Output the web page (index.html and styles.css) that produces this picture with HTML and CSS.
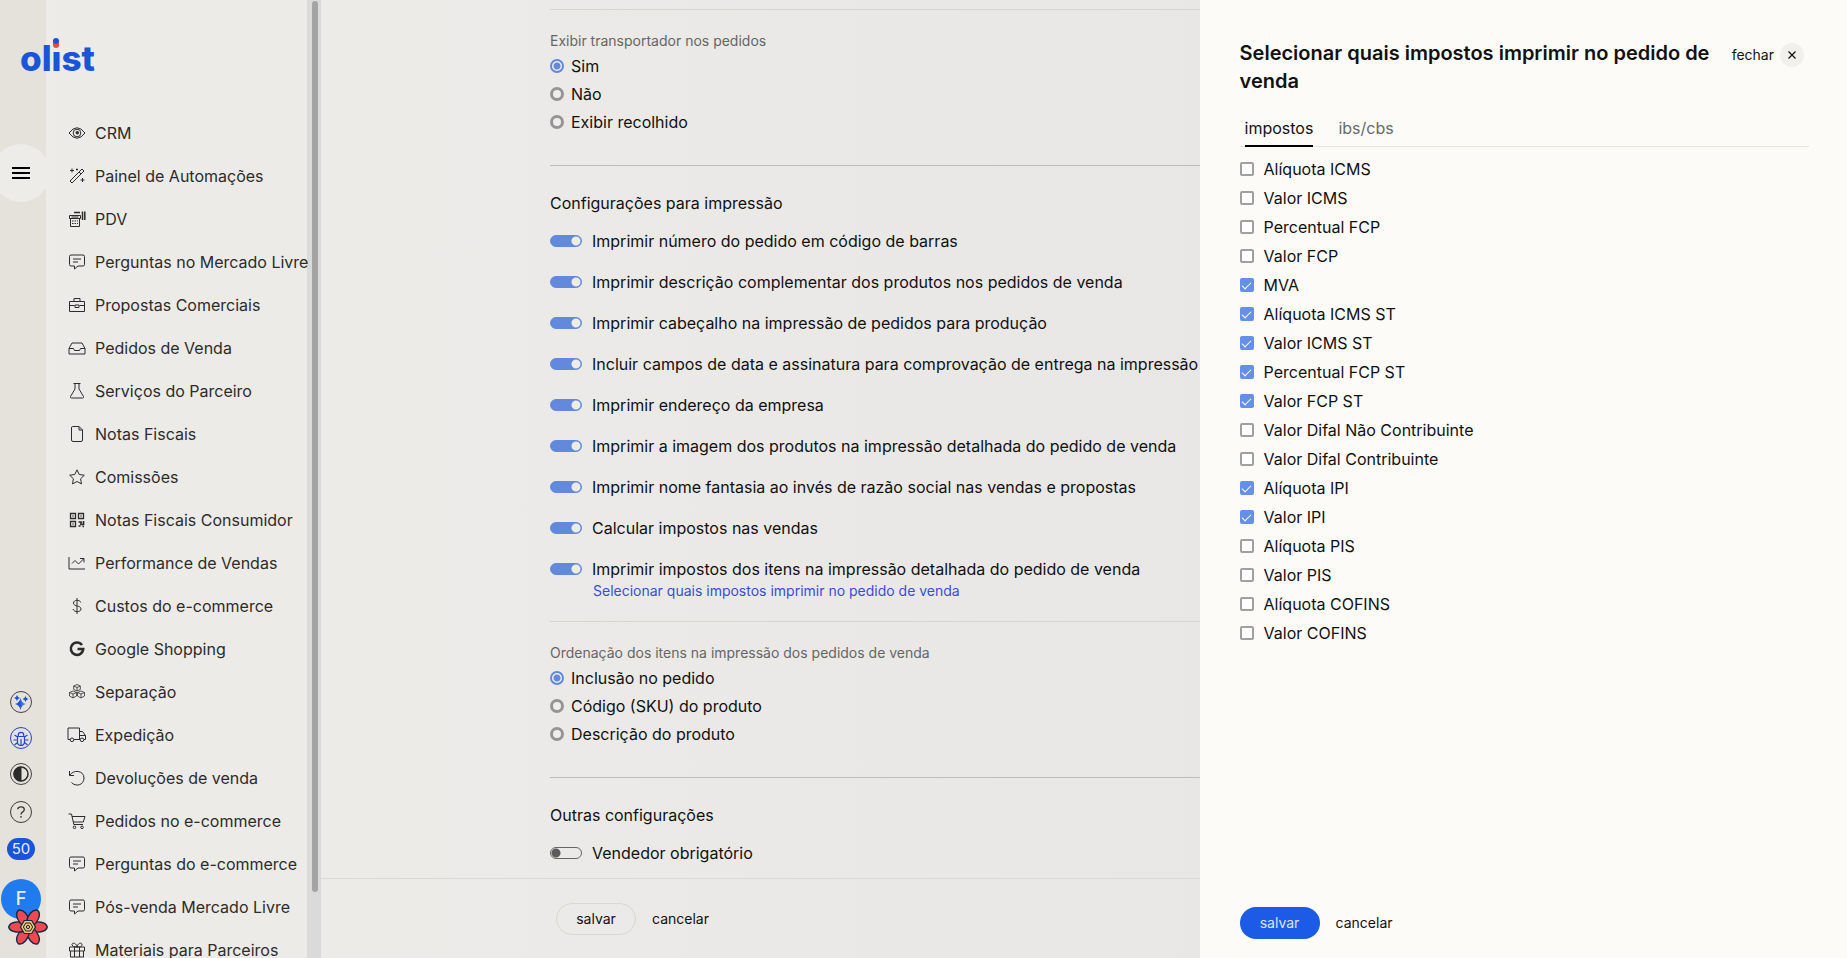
FILE: index.html
```
<!DOCTYPE html>
<html lang="pt-BR">
<head>
<meta charset="utf-8">
<title>Configurações dos pedidos de venda</title>
<link rel="stylesheet" href="styles.css">
</head>
<body>
<div class="app">
  <aside class="rail">
    <button class="menu-button" aria-label="Menu"><svg width="20" height="14" viewBox="0 0 20 14"><path d="M1 2h18M1 7h18M1 12h18" stroke="#000" stroke-width="2" fill="none"/></svg></button>
    <div class="rail-tools">
      <button class="tool" aria-label="Assistente"><svg viewBox="0 0 22 22"><defs><linearGradient id="spark" x1="0" x2="1" y1="0" y2="0"><stop offset=".4" stop-color="#1d50d8"/><stop offset="1" stop-color="#6fa0cc"/></linearGradient></defs><circle cx="11" cy="11" r="10.5" fill="none" stroke="#444"/><path fill="url(#spark)" d="M10.500 7q1 5 5.500 6-4.500 1-5.500 6-1-5-5.500-6 4.500-1 5.500-6z"/><path fill="#1d50d8" d="M7 4q.6 2.400 3 3-2.400.6-3 3-.6-2.400-3-3 2.400-.6 3-3zM15.500 5q.6 2.400 3 3-2.400.6-3 3-.6-2.400-3-3 2.400-.6 3-3z"/></svg></button>
      <button class="tool" aria-label="Relatar erro"><svg viewBox="0 0 22 22" fill="none" stroke="#2345dd"><circle cx="11" cy="11" r="10.500"/><path d="M7.500 9.500h7v5.500a3.500 3.500 0 0 1-7 0zM8.300 9.500V8a2.700 2.700 0 0 1 5.400 0v1.500M11 12v6M7.500 10L4.500 8M14.500 10l3-2M7.500 13H3.500M14.500 13h4M7.500 15.500l-3 2.500M14.500 15.500l3 2.500" stroke-width="1.200"/></svg></button>
      <button class="tool" aria-label="Contraste"><svg viewBox="0 0 22 22" fill="none" stroke="#2b2b2b"><circle cx="11" cy="11" r="10.500" stroke="#444"/><path d="M11 4a7 7 0 0 0 0 14z" fill="#2b2b2b"/><circle cx="11" cy="11" r="7" stroke-width="1.500"/></svg></button>
      <button class="tool tool-help" aria-label="Ajuda"><svg viewBox="0 0 22 22" fill="none" stroke="#3c3c3c"><circle cx="11" cy="11" r="10.500"/><path d="M7.700 8.300C8 5 14.300 5 14.300 8.500c0 2.500-3.300 2.300-3.300 5M11 15v1.800" stroke-width="1.400"/></svg></button>
      <span class="badge">50</span>
      <div class="avatar-wrap">
        <button class="avatar">F</button>
        <svg class="flower" viewBox="-20 -18 40 36" aria-hidden="true">
          <g fill="#ee4850" stroke="#0f2c46" stroke-width="1.400">
            <path id="petal" d="M4-4C9-6 18-5.500 19.300 0 18 5.500 9 6 4 4z"/>
            <use href="#petal" transform="rotate(60)"/><use href="#petal" transform="rotate(120)"/><use href="#petal" transform="rotate(180)"/><use href="#petal" transform="rotate(240)"/><use href="#petal" transform="rotate(300)"/>
          </g>
          <path d="M-3.700-6.500h7.400L7.500 0 3.700 6.500h-7.400L-7.500 0z" fill="#f5c36a" stroke="#0f2c46" stroke-width="1.200"/>
          <path d="M-2.300-4h4.600L4.600 0 2.300 4h-4.600L-4.600 0z" fill="#f5c36a" stroke="#0f2c46"/>
          <circle r="1.600" fill="#f5c36a" stroke="#0f2c46"/>
        </svg>
      </div>
    </div>
  </aside>

  <div class="sidebar">
    <svg class="logo" viewBox="0 0 76 44" role="img" aria-label="olist"><text class="logo-text" x="0" y="36">olist</text><rect class="logo-gap" x="32" y="0" width="9" height="15"/><rect class="logo-red" x="33" y="4" width="6" height="9" rx="3"/><circle class="logo-blue" cx="36" cy="6" r="3"/></svg>
    <nav class="nav">
      <a href="#"><svg viewBox="0 0 18 18"><path d="M1 9q8-10.500 16 0-8 10.500-16 0z"/><circle cx="9" cy="9" r="3.800"/><circle cx="9.300" cy="8.700" r="1.300" class="solid"/></svg>CRM</a>
      <a href="#"><svg viewBox="0 0 18 18"><path d="M2 14L14 2l2 2L4 16zM11 5l2 2M4 1.500v4M2 3.500h4M14.500 11v4M12.500 13h4M9 1.500v2M8 2.500h2"/></svg>Painel de Automações</a>
      <a href="#"><svg viewBox="0 0 18 18"><path d="M1.500 5.500h11v3h-11zM2.500 8.500v8h9v-8M3.500 7h7M4 11h1.500M6.500 11H8M9 11h1M4 13.500h1.500M6.500 13.500H8M9 13.500h1"/><path d="M6 2.500h6M14.500 1.500V10M16.800 1.500V10" stroke-width="1.500"/></svg>PDV</a>
      <a href="#"><svg viewBox="0 0 18 18"><path d="M3 2h12q1.500 0 1.500 1.500v8q0 1.500-1.500 1.500h-5l-3.500 3V13H3q-1.500 0-1.500-1.500v-8Q1.500 2 3 2zM5 6h8M5 9h5"/></svg>Perguntas no Mercado Livre</a>
      <a href="#"><svg viewBox="0 0 18 18"><path d="M1.500 5.500h15v10h-15zM6 5.500v-3h6v3M1.500 9.500h5M11.500 9.500h5M7 9h4v2.500H7z"/></svg>Propostas Comerciais</a>
      <a href="#"><svg viewBox="0 0 18 18"><path d="M1 9.500L4 4h10l3 5.500V15H1zM1 9.500h4.500l1 2h5l1-2H17"/></svg>Pedidos de Venda</a>
      <a href="#"><svg viewBox="0 0 18 18"><path d="M5.500 1.500h7M7 1.500v5.500L2.500 14.500q-.5 1.500 1 1.500h11q1.500 0 1-1.500L11 7V1.500"/></svg>Serviços do Parceiro</a>
      <a href="#"><svg viewBox="0 0 18 18"><path d="M4.500 1.500H11L14.500 5v10q0 1.500-1.500 1.500H5q-1.500 0-1.500-1.500V3q0-1.500 1-1.500zM11 1.500V5h3.500"/></svg>Notas Fiscais</a>
      <a href="#"><svg viewBox="0 0 18 18"><path d="M9 1.800l2.200 4.700 5.100.7-3.700 3.600.9 5.100L9 13.500l-4.500 2.400.9-5.100L1.700 7.200l5.100-.7z"/></svg>Comissões</a>
      <a href="#"><svg viewBox="0 0 18 18"><path d="M2.500 2.500h5v5h-5zM10.500 2.500h5v5h-5zM2.500 10.500h5v5h-5z" stroke-width="1.300"/><path d="M4.500 5h1M12.500 5h1M4.500 13h1M10.500 11h2.500v2.500h2.500v-3.500M10.500 15h2M14.500 15.500h1.500" stroke-width="1.700"/></svg>Notas Fiscais Consumidor</a>
      <a href="#"><svg viewBox="0 0 18 18"><path d="M1 3v12h16M4 9.500l3-3 3.500 3.500L15.500 5M12 4.500h4v4"/></svg>Performance de Vendas</a>
      <a href="#"><svg viewBox="0 0 18 18"><path d="M9 1v16M12.800 5.500C12 2.500 5.500 2.500 5.500 6c0 4 7.500 2 7.500 6 0 3.500-7 3.500-8 0"/></svg>Custos do e-commerce</a>
      <a href="#"><svg viewBox="0 0 18 18"><path d="M14 5A6.200 6.200 0 1 0 15.200 9H9.500" stroke-width="2.600"/></svg>Google Shopping</a>
      <a href="#"><svg viewBox="0 0 18 18"><path d="M9 1.500l3.300 1.500v3.500L9 8 5.700 6.500V3zM5.700 3L9 4.500 12.300 3M9 4.500V8M5 8l3.500 1.500V13L5 15l-3.500-2V9.500zM1.500 9.500L5 11l3.500-1.500M5 11v4M13 8l3.500 1.500V13L13 15l-3.500-2V9.500zM9.500 9.500L13 11l3.500-1.500M13 11v4" stroke-width=".8"/></svg>Separação</a>
      <a href="#"><svg viewBox="0 0 18 18"><path d="M2 13.500H0V2h11.500v11.500H6M11.500 5.500h3l3 4v4H16M12 13.500h-1M11.500 9.500h6"/><circle cx="4" cy="13.800" r="1.800"/><circle cx="14" cy="13.800" r="1.800"/></svg>Expedição</a>
      <a href="#"><svg viewBox="0 0 18 18"><path d="M1.500 2v4.500H6M1.800 6.300C5 .5 16 1 16 9c0 7.500-8.500 9-12.500 4.500"/></svg>Devoluções de venda</a>
      <a href="#"><svg viewBox="0 0 18 18"><path d="M.5 2h3l2.300 10.500H15M4 4.500h13L15.300 10H5.200"/><circle cx="6.500" cy="15.300" r="1.300"/><circle cx="14" cy="15.300" r="1.300"/></svg>Pedidos no e-commerce</a>
      <a href="#"><svg viewBox="0 0 18 18"><path d="M3 2h12q1.500 0 1.500 1.500v8q0 1.500-1.500 1.500h-5l-3.500 3V13H3q-1.500 0-1.500-1.500v-8Q1.500 2 3 2zM5 6h8M5 9h5"/></svg>Perguntas do e-commerce</a>
      <a href="#"><svg viewBox="0 0 18 18"><path d="M3 2h12q1.500 0 1.500 1.500v8q0 1.500-1.500 1.500h-5l-3.500 3V13H3q-1.500 0-1.500-1.500v-8Q1.500 2 3 2zM5 6h8M5 9h5"/></svg>Pós-venda Mercado Livre</a>
      <a href="#"><svg viewBox="0 0 18 18"><path d="M1.500 6h15v4h-15zM2.500 10v6h13v-6M6.500 6v10M11.500 6v10M9 6C8 1 3.500 1.500 4 4q.3 2 5 2c4.700 0 4.700-1 5-2 .5-2.500-4-3-5 2z"/></svg>Materiais para Parceiros</a>
    </nav>
  </div>
  <div class="scroll-track"><div class="scroll-thumb"></div></div>

  <main class="main">
    <div class="content">
      <fieldset class="radios">
        <legend>Exibir transportador nos pedidos</legend>
        <label><input type="radio" name="transportador" checked>Sim</label>
        <label><input type="radio" name="transportador">Não</label>
        <label><input type="radio" name="transportador">Exibir recolhido</label>
      </fieldset>
      <section class="group">
        <h2>Configurações para impressão</h2>
        <label class="switch"><input type="checkbox" checked>Imprimir número do pedido em código de barras</label>
        <label class="switch"><input type="checkbox" checked>Imprimir descrição complementar dos produtos nos pedidos de venda</label>
        <label class="switch"><input type="checkbox" checked>Imprimir cabeçalho na impressão de pedidos para produção</label>
        <label class="switch"><input type="checkbox" checked>Incluir campos de data e assinatura para comprovação de entrega na impressão de</label>
        <label class="switch"><input type="checkbox" checked>Imprimir endereço da empresa</label>
        <label class="switch"><input type="checkbox" checked>Imprimir a imagem dos produtos na impressão detalhada do pedido de venda</label>
        <label class="switch"><input type="checkbox" checked>Imprimir nome fantasia ao invés de razão social nas vendas e propostas</label>
        <label class="switch"><input type="checkbox" checked>Calcular impostos nas vendas</label>
        <label class="switch"><input type="checkbox" checked>Imprimir impostos dos itens na impressão detalhada do pedido de venda</label>
        <a class="select-link" href="#">Selecionar quais impostos imprimir no pedido de venda</a>
      </section>
      <fieldset class="radios radios-light">
        <legend>Ordenação dos itens na impressão dos pedidos de venda</legend>
        <label><input type="radio" name="ordem" checked>Inclusão no pedido</label>
        <label><input type="radio" name="ordem">Código (SKU) do produto</label>
        <label><input type="radio" name="ordem">Descrição do produto</label>
      </fieldset>
      <section class="group">
        <h2>Outras configurações</h2>
        <label class="switch"><input type="checkbox">Vendedor obrigatório</label>
      </section>
    </div>
    <footer class="actions main-actions">
      <button class="pill pill-outline">salvar</button>
      <button class="plain">cancelar</button>
    </footer>
  </main>
</div>

<section class="panel" role="dialog" aria-labelledby="panel-title">
  <header class="panel-head">
    <h1 id="panel-title">Selecionar quais impostos imprimir no pedido de venda</h1>
    <button class="close">fechar <span class="close-icon"><svg width="8" height="8" viewBox="0 0 8 8"><path d="M.5.5l7 7M7.500.5l-7 7" stroke="#111" stroke-width="1.200"/></svg></span></button>
  </header>
  <div class="tabs" role="tablist">
    <button class="tab tab-active" role="tab" aria-selected="true">impostos</button>
    <button class="tab" role="tab" aria-selected="false">ibs/cbs</button>
  </div>
  <div class="checks">
    <label><input type="checkbox">Alíquota ICMS</label>
    <label><input type="checkbox">Valor ICMS</label>
    <label><input type="checkbox">Percentual FCP</label>
    <label><input type="checkbox">Valor FCP</label>
    <label><input type="checkbox" checked>MVA</label>
    <label><input type="checkbox" checked>Alíquota ICMS ST</label>
    <label><input type="checkbox" checked>Valor ICMS ST</label>
    <label><input type="checkbox" checked>Percentual FCP ST</label>
    <label><input type="checkbox" checked>Valor FCP ST</label>
    <label><input type="checkbox">Valor Difal Não Contribuinte</label>
    <label><input type="checkbox">Valor Difal Contribuinte</label>
    <label><input type="checkbox" checked>Alíquota IPI</label>
    <label><input type="checkbox" checked>Valor IPI</label>
    <label><input type="checkbox">Alíquota PIS</label>
    <label><input type="checkbox">Valor PIS</label>
    <label><input type="checkbox">Alíquota COFINS</label>
    <label><input type="checkbox">Valor COFINS</label>
  </div>
  <footer class="actions panel-actions">
    <button class="pill pill-primary">salvar</button>
    <button class="plain">cancelar</button>
  </footer>
</section>
</body>
</html>
```
FILE: styles.css
```
* { box-sizing: border-box; }

body {
  margin: 0;
  overflow: hidden;
  color: #111;
  font: 16px/24px Inter, "Open Sans", sans-serif;
}

button {
  padding: 0;
  border: 0;
  background: none;
  color: inherit;
  font: inherit;
  cursor: pointer;
}

input { appearance: none; flex: none; margin: 0; }

.app { display: flex; height: 100vh; }

/* Icon rail */
.rail {
  display: flex;
  flex: none;
  flex-direction: column;
  align-items: center;
  justify-content: space-between;
  width: 46px;
  padding: 144px 4px 13px 0;
  background: #e5e2db;
}

.menu-button {
  display: flex;
  flex: none;
  align-items: center;
  justify-content: center;
  width: 58px;
  height: 58px;
  border-radius: 50%;
  background: #edece8;
}

.rail-tools { display: flex; flex-direction: column; align-items: center; gap: 14px; }
.tool { width: 22px; height: 22px; }
.tool svg { display: block; }
.tool-help { margin-top: 2px; }

.badge {
  width: 28px;
  margin-top: 1px;
  border-radius: 11px;
  background: #1a54d9;
  color: #e8edf8;
  font-size: 15px;
  line-height: 22px;
  text-align: center;
}

.avatar-wrap { position: relative; z-index: 2; margin-top: 5px; height: 66px; }
.avatar {
  width: 40px;
  height: 40px;
  border-radius: 50%;
  background: #207bee;
  color: #e9eef6;
  font-size: 18px;
  font-weight: 500;
}
.flower { position: absolute; top: 30px; left: 7px; width: 40px; height: 36px; }

/* Sidebar */
.sidebar {
  position: relative;
  flex: none;
  width: 262px;
  padding-top: 111px;
  background: linear-gradient(90deg, #edece9 11px, #ecebe7 11px);
  border-right: 1px solid #dddbd0;
}

.logo { position: absolute; top: 35px; left: -26px; width: 76px; height: 44px; }
.logo-text { font: 800 35px Inter, sans-serif; fill: #1a54d9; }
.logo-gap { fill: #ecebe7; }
.logo-red { fill: #ee4b3b; }
.logo-blue { fill: #1a54d9; }

.nav { display: flex; flex-direction: column; }
.nav a {
  display: flex;
  align-items: center;
  gap: 9px;
  height: 43px;
  padding-left: 22px;
  color: #2c2c2c;
  white-space: nowrap;
  text-decoration: none;
}
.nav svg {
  flex: none;
  width: 18px;
  height: 18px;
  overflow: visible;
  fill: none;
  stroke: #2c2c2c;
  stroke-width: 1;
}
.nav .solid { fill: #2c2c2c; }

.scroll-track { flex: none; width: 13px; padding: 1px 3px 0 4px; background: #dadada; }
.scroll-thumb { height: 93vh; border-radius: 3px; background: #a4a4a4; }

/* Settings */
.main {
  display: flex;
  flex: 1;
  flex-direction: column;
  min-width: 0;
  background: linear-gradient(90deg, #ecebe8, #e8e7e5 880px);
}

.content {
  flex: 1;
  min-height: 0;
  padding: 9px 0 0 229px;
  overflow: hidden;
  white-space: nowrap;
}

.radios {
  display: flex;
  flex-direction: column;
  margin: 0;
  padding: 19px 0 29px;
  border: 0;
  border-top: 1px solid #d5d4cd;
}
.radios legend { float: left; padding: 0; color: #666; font-size: 14px; line-height: 23px; }
.radios label { display: flex; align-items: center; gap: 7px; height: 28px; }
.radios input {
  width: 14px;
  height: 14px;
  border: 3px solid #959595;
  border-radius: 50%;
  background: #eee;
}
.radios input:checked {
  border: 2px solid #6389dc;
  background: radial-gradient(circle, #6389dc 3px, #eee 4px);
}

.group { padding: 25px 0 20px; border-top: 1px solid #bdbdbb; }
.group h2 { margin: 0 0 5px; font-size: 16px; font-weight: 400; line-height: 24px; }

.switch { display: flex; align-items: center; gap: 10px; height: 41px; }
.switch input {
  width: 32px;
  height: 12px;
  border: 1px solid #666;
  border-radius: 6px;
  background: radial-gradient(circle at 5px 5px, #5c5c5c 4px, transparent 5px);
}
.switch input:checked {
  border-color: #6389dc;
  background: radial-gradient(circle at 25px 5px, #edece8 4px, #6389dc 5px);
}
.select-link {
  display: block;
  margin: -8px 0 0 43px;
  color: #3b4cdd;
  font-size: 14px;
  line-height: 20px;
  text-decoration: none;
}

/* Action buttons */
.actions { display: flex; align-items: center; gap: 16px; font-size: 14px; }
.pill { width: 80px; height: 32px; border-radius: 16px; }
.pill-outline { border: 1px solid #d8d7ce; }
.pill-primary { background: #1c5be6; color: #dfe5f5; }
.main-actions {
  flex: none;
  height: 80px;
  padding: 0 0 0 235px;
  border-top: 1px solid #d9d9d6;
}

/* Side panel */
.panel {
  position: fixed;
  inset: 0 0 0 auto;
  z-index: 5;
  display: flex;
  flex-direction: column;
  width: calc(35vw + 1px);
  padding: 39px 38px 19px 40px;
  background: #fcfbf8;
}
.panel-head { display: flex; align-items: flex-start; justify-content: space-between; gap: 12px; }
.panel-head h1 { flex: 1; margin: 0; font-size: 20px; font-weight: 600; line-height: 28px; }
.close { display: flex; align-items: center; gap: 6px; margin: 4px 5px 0 0; font-size: 14px; }
.close-icon {
  display: flex;
  align-items: center;
  justify-content: center;
  width: 24px;
  height: 24px;
  border-radius: 50%;
  background: #f1f0eb;
}

.tabs {
  display: flex;
  gap: 25px;
  margin-top: 14px;
  padding-left: 5px;
  border-bottom: 1px solid #e6e6d8;
}
.tab {
  height: 38px;
  margin-bottom: -1px;
  padding-top: 2px;
  border-bottom: 2px solid transparent;
  color: #6a6a6a;
}
.tab-active { border-color: #000; color: #111; }

.checks { display: flex; flex: 1; flex-direction: column; padding-top: 7px; }
.checks label { display: flex; align-items: center; gap: 10px; height: 29px; }
.checks input {
  display: flex;
  justify-content: center;
  width: 14px;
  height: 14px;
  border: 2px solid #a0a0a0;
  border-radius: 2px;
  background: #fff;
}
.checks input:checked { border-color: #668fea; background: #668fea; }
.checks input:checked::after {
  content: "";
  width: 4px;
  height: 8px;
  border: solid #fff;
  border-width: 0 1px 1px 0;
  transform: rotate(45deg);
}
```
